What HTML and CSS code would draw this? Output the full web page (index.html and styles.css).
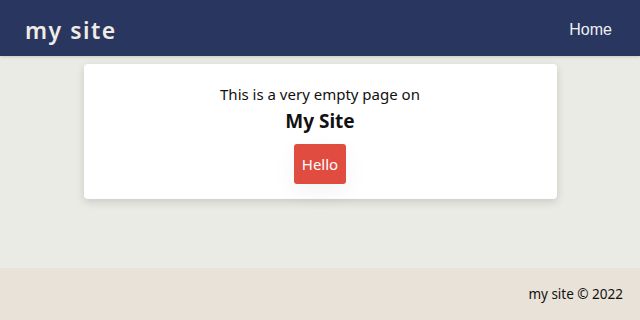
FILE: index.html
```html
<!DOCTYPE html>
<html>
<head>
<meta charset="utf-8">
<link rel="stylesheet" href="styles.css">
</head>
<body>
<header class="topbar">
  <div class="brand">my site</div>
  <nav class="nav"><a class="nav-link" href="#">Home</a></nav>
</header>
<main class="main">
  <section class="card">
    <p class="intro">This is a very empty page on</p>
    <h1 class="title">My Site</h1>
    <button class="btn">Hello</button>
  </section>
</main>
<footer class="footer">my site © 2022</footer>
</body>
</html>
```
FILE: styles.css
```css
html, body {
  margin: 0;
  padding: 0;
}
body {
  width: 640px;
  height: 320px;
  display: flex;
  flex-direction: column;
  font-family: "Noto Sans", "Open Sans", sans-serif;
  background: #ebebe5;
  color: #111;
  overflow: hidden;
}
.topbar {
  height: 56px;
  flex: none;
  background: #293660;
  display: flex;
  align-items: center;
  justify-content: space-between;
  padding: 0 28px 0 25px;
  box-shadow: 0 1px 3px rgba(0,0,0,0.15);
  position: relative;
  z-index: 1;
}
.brand {
  color: #efece4;
  font-size: 23px;
  font-weight: 600;
  letter-spacing: 1.5px;
  margin-top: 4px;
}
.nav-link {
  color: #f0f0f0;
  font-family: "Liberation Sans", Arial, sans-serif;
  font-size: 16px;
  text-decoration: none;
  position: relative;
  top: 1px;
}
.main {
  flex: 1;
  display: flex;
  justify-content: center;
  align-items: flex-start;
  padding-top: 8px;
}
.card {
  width: 473px;
  background: #fff;
  border-radius: 4px;
  box-shadow: 0 3px 9px rgba(0,0,0,0.14);
  display: flex;
  flex-direction: column;
  align-items: center;
  padding: 18px 0 15px;
}
.intro {
  margin: 0;
  font-size: 15px;
  line-height: 24px;
}
.title {
  margin: 2px 0 0;
  font-size: 19px;
  line-height: 26px;
  font-weight: 700;
}
.btn {
  margin-top: 10px;
  width: 52px;
  height: 40px;
  border: none;
  border-radius: 3px;
  background: #e04c40;
  color: #fff;
  font-family: "Noto Sans", sans-serif;
  font-size: 15px;
  padding: 0;
  box-shadow: 0 8px 24px rgba(0,0,0,0.05);
}
.footer {
  height: 52px;
  flex: none;
  background: #e9e2d8;
  display: flex;
  align-items: center;
  justify-content: flex-end;
  padding-right: 17px;
  font-size: 13.5px;
  color: #111;
}
```
